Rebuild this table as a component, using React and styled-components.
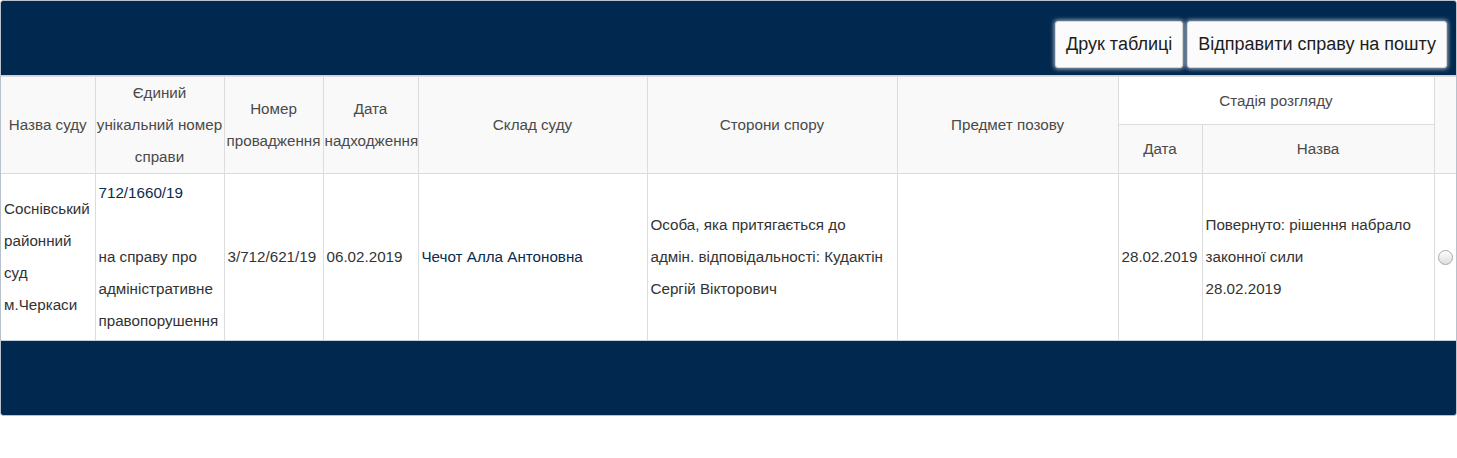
import React from 'react'
import styled, { createGlobalStyle } from 'styled-components'

const GlobalStyle = createGlobalStyle`
  html, body {
    margin: 0;
    padding: 0;
    background: #fff;
    font-family: "Liberation Sans", Arial, sans-serif;
  }
`

const Panel = styled.section`
  width: 1457px;
  box-sizing: border-box;
  border: 1px solid #b9c2cc;
  border-radius: 3px;
  overflow: hidden;
  background: #fff;
`

const TopBar = styled.div`
  height: 75px;
  background: #01284e;
  border-bottom: 1px solid #c9d0d8;
  display: flex;
  justify-content: flex-end;
  align-items: flex-start;
  gap: 4px;
  padding: 20px 9px 0 0;
  box-sizing: border-box;
`

const BarButton = styled.button`
  height: 47px;
  padding: 0 10px;
  font-family: "Liberation Sans", Arial, sans-serif;
  font-size: 18px;
  color: #1d1d1d;
  background: #fbfbfb;
  border: 1px solid #d6d6d6;
  border-radius: 3px;
  box-shadow: 0 0 4px 1px rgba(190, 200, 212, 0.85);
  cursor: pointer;
`

const BottomBar = styled.div`
  height: 74px;
  background: #01284e;
  border-top: 1px solid #c9d0d8;
`

const Table = styled.table`
  width: 1455px;
  table-layout: fixed;
  border-collapse: collapse;
  font-size: 15.2px;
  line-height: 32px;
`

const HeadCell = styled.th`
  background: ${p => p.$plain ? '#fff' : '#f9f9f9'};
  color: #4a4a4a;
  font-weight: normal;
  text-align: center;
  vertical-align: middle;
  padding: 0 1px;
  border: 1px solid #dcdcdc;
  height: ${p => p.$h || 'auto'};
  &:first-child { border-left: none; }
  &:last-child { border-right: none; }
`

const Cell = styled.td`
  color: #333;
  vertical-align: middle;
  padding: 3px 5px 3px 3px;
  border: 1px solid #dcdcdc;
  border-bottom: none;
  text-align: ${p => p.$center ? 'center' : 'left'};
  &:first-child { border-left: none; }
  &:last-child { border-right: none; padding: 3px 0; }
`

const CaseLink = styled.a`
  color: #0a2a52;
  text-decoration: none;
`

const Radio = styled.span`
  display: inline-block;
  width: 13px;
  height: 13px;
  border-radius: 50%;
  border: 1px solid #a8a8a8;
  background: linear-gradient(#fdfdfd, #dedede);
  box-shadow: inset 0 1px 1px rgba(255, 255, 255, 0.9);
  vertical-align: middle;
`

const widths = [94, 129, 99, 95, 229, 250, 221, 84, 232, 22]

export default function App() {
  return (
    <>
      <GlobalStyle />
      <Panel>
        <TopBar>
          <BarButton>Друк таблиці</BarButton>
          <BarButton>Відправити справу на пошту</BarButton>
        </TopBar>
        <Table>
          <colgroup>
            {widths.map((w, i) => <col key={i} style={{ width: w }} />)}
          </colgroup>
          <thead>
            <tr>
              <HeadCell rowSpan={2}>Назва суду</HeadCell>
              <HeadCell rowSpan={2}>Єдиний унікальний номер справи</HeadCell>
              <HeadCell rowSpan={2}>Номер провадження</HeadCell>
              <HeadCell rowSpan={2}>Дата надходження</HeadCell>
              <HeadCell rowSpan={2}>Склад суду</HeadCell>
              <HeadCell rowSpan={2}>Сторони спору</HeadCell>
              <HeadCell rowSpan={2}>Предмет позову</HeadCell>
              <HeadCell colSpan={2} $h="47px" $plain>Стадія розгляду</HeadCell>
              <HeadCell rowSpan={2} />
            </tr>
            <tr>
              <HeadCell $h="48px">Дата</HeadCell>
              <HeadCell $h="48px">Назва</HeadCell>
            </tr>
          </thead>
          <tbody>
            <tr>
              <Cell>Соснівський районний суд м.Черкаси</Cell>
              <Cell>
                <CaseLink href="#">712/1660/19</CaseLink>
                <br />
                <br />
                на справу про адміністративне правопорушення
              </Cell>
              <Cell>3/712/621/19</Cell>
              <Cell>06.02.2019</Cell>
              <Cell><CaseLink href="#">Чечот Алла Антоновна</CaseLink></Cell>
              <Cell>Особа, яка притягається до адмін. відповідальності: Кудактін Сергій Вікторович</Cell>
              <Cell />
              <Cell>28.02.2019</Cell>
              <Cell>Повернуто: рішення набрало законної сили<br />28.02.2019</Cell>
              <Cell $center><Radio /></Cell>
            </tr>
          </tbody>
        </Table>
        <BottomBar />
      </Panel>
    </>
  )
}
